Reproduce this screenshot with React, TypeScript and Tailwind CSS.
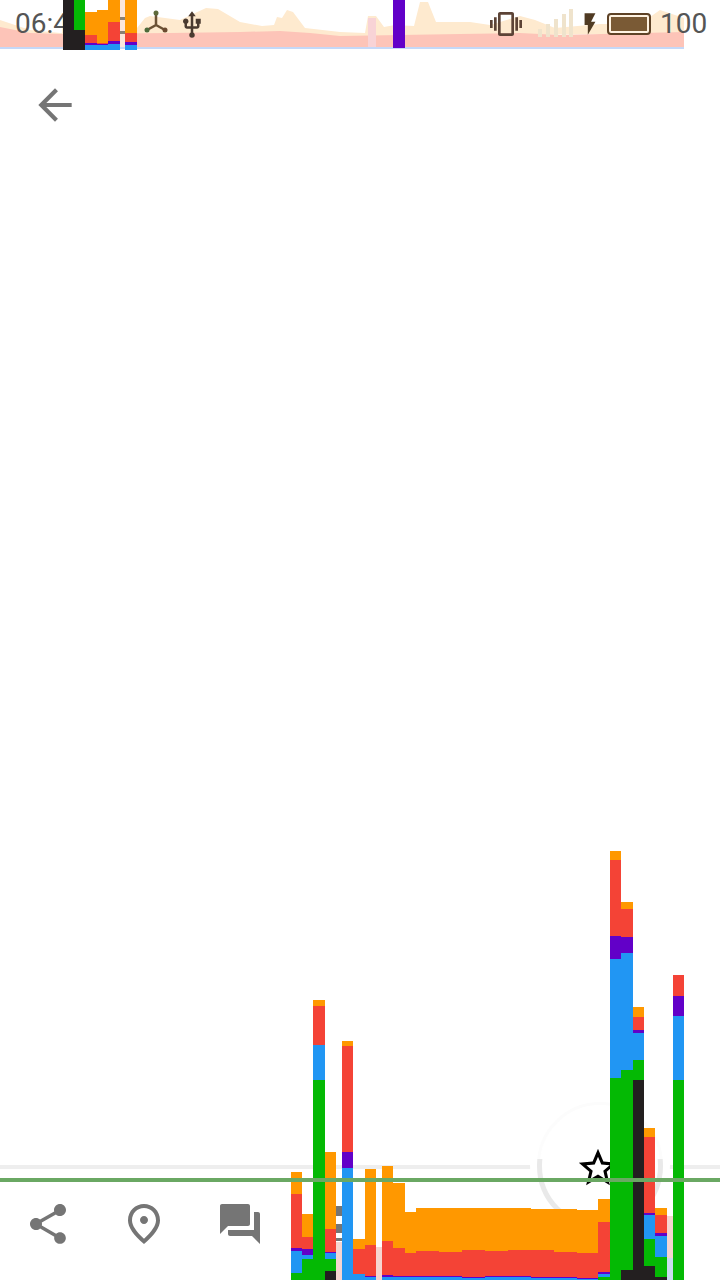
import { MdArrowBack, MdFlashOn, MdForum, MdOutlinePlace, MdShare, MdStarBorder, MdUsb, MdVibration } from "react-icons/md";

const O = "#ff9800";
const R = "#f44336";
const P = "#6200c8";
const B = "#2196f3";
const G = "#04b904";
const K = "#231f20";
const PALE = "#f6d5d0";

// one bar: x, width, top, then [colour, y where the colour ends]
type Bar = [number, number, number, [string, number][]];

const bars: Bar[] = [
  [291, 11, 1172, [[O, 1194], [R, 1248], [P, 1251], [B, 1273], [G, 1280]]],
  [302, 11, 1214, [[O, 1237], [R, 1249], [P, 1255], [B, 1259], [G, 1280]]],
  [313, 12, 1000, [[O, 1006], [R, 1045], [B, 1080], [G, 1280]]],
  [325, 11, 1152, [[O, 1229], [R, 1252], [P, 1253], [B, 1259], [G, 1271], [K, 1280]]],
  [336, 6, 1242, [[PALE, 1280]]],
  [342, 11, 1041, [[O, 1046], [R, 1152], [P, 1168], [B, 1280]]],
  [353, 12, 1239, [[O, 1249], [R, 1274], [B, 1280]]],
  [365, 11, 1169, [[O, 1245], [R, 1276], [P, 1277], [B, 1280]]],
  [376, 6, 1247, [[PALE, 1280]]],
  [382, 11, 1166, [[O, 1241], [R, 1275], [P, 1277], [B, 1280]]],
  [393, 12, 1183, [[O, 1248], [R, 1276], [P, 1277], [B, 1280]]],
  [405, 11, 1212, [[O, 1253], [R, 1276], [P, 1277], [B, 1280]]],
  [416, 23, 1208, [[O, 1251], [R, 1276], [P, 1277], [B, 1280]]],
  [439, 23, 1208, [[O, 1252], [R, 1276], [P, 1277], [B, 1280]]],
  [462, 23, 1208, [[O, 1250], [R, 1277], [P, 1278], [B, 1280]]],
  [485, 23, 1208, [[O, 1251], [R, 1276], [P, 1277], [B, 1280]]],
  [508, 23, 1208, [[O, 1250], [R, 1276], [P, 1277], [B, 1280]]],
  [531, 23, 1209, [[O, 1250], [R, 1277], [P, 1278], [B, 1280]]],
  [554, 23, 1209, [[O, 1252], [R, 1277], [P, 1278], [B, 1280]]],
  [577, 21, 1210, [[O, 1253], [R, 1278], [P, 1279], [B, 1280]]],
  [598, 12, 1199, [[O, 1222], [R, 1272], [P, 1274], [B, 1277], [G, 1280]]],
  [610, 11, 851, [[O, 860], [R, 936], [P, 959], [B, 1078], [G, 1280]]],
  [621, 12, 902, [[O, 909], [R, 937], [P, 953], [B, 1070], [G, 1270], [K, 1280]]],
  [633, 11, 1007, [[O, 1017], [R, 1030], [P, 1033], [B, 1060], [G, 1080], [K, 1280]]],
  [644, 11, 1128, [[O, 1137], [R, 1213], [P, 1215], [B, 1239], [G, 1266], [K, 1280]]],
  [655, 12, 1208, [[O, 1215], [R, 1233], [P, 1236], [B, 1257], [G, 1277], [K, 1280]]],
  [667, 6, 1216, [[PALE, 1258], ["#c9dcf0", 1280]]],
  [673, 11, 975, [[R, 996], [P, 1016], [B, 1080], [G, 1280]]],
  // status bar part
  [63, 11, 0, [[K, 50]]],
  [74, 11, 0, [[G, 30], [K, 50]]],
  [85, 12, 12, [[O, 35], [R, 43], [P, 45], [B, 50]]],
  [97, 11, 10, [[O, 43], [R, 44], [P, 45], [B, 50]]],
  [108, 12, 0, [[O, 22], [R, 41], [P, 44], [B, 50]]],
  [125, 12, 0, [[O, 33], [R, 42], [P, 45], [B, 50]]],
  [393, 12, 0, [[P, 48]]],
];

const paleOrange =
  "0,20 12,24 30,30 60,33 137,28 145,18 150,16 180,20 206,8 218,9 240,22 262,26 274,25 277,17 282,18 287,10 293,12 305,28 340,32 365,33 368,16 376,16 384,27 395,25 414,26 420,2 428,2 436,22 470,22 490,25 520,16 535,20 555,28 600,24 640,24 660,10 684,18 684,33 0,42";
const pink =
  "0,27 30,33 60,34 170,33 240,32 280,31 310,33 340,36 460,34 520,33 560,35 684,32 684,47 0,47";

function Chart() {
  return (
    <svg className="absolute top-0 left-0 w-[720px] h-[1280px]" viewBox="0 0 720 1280">
      {bars.map(([x, w, top, segs], i) => {
        let y = top;
        return (
          <g key={i}>
            {segs.map(([c, end], j) => {
              const r = <rect key={j} x={x} y={y} width={w} height={end - y} fill={c} />;
              y = end;
              return r;
            })}
          </g>
        );
      })}
      <rect x="120" y="17" width="5" height="3" fill="#8a8074" />
      <rect x="120" y="31" width="5" height="3" fill="#8a8074" />
    </svg>
  );
}

function HubIcon() {
  return (
    <svg width="30" height="30" viewBox="0 0 30 30" stroke="#6b5235" strokeWidth="2.5" fill="none">
      <path d="M15 3V15L6 20M15 15L24 20" />
      <circle cx="15" cy="3" r="2.5" fill="#5d6a3a" stroke="none" />
      <circle cx="6" cy="20" r="2.5" fill="#4d6a3a" stroke="none" />
      <circle cx="24" cy="20" r="2.5" fill="#6b4a30" stroke="none" />
    </svg>
  );
}

function SignalIcon() {
  return (
    <svg width="36" height="28" viewBox="0 0 36 28" fill="#efe3cc">
      <rect x="0" y="20" width="4" height="8" />
      <rect x="8" y="15" width="4" height="13" />
      <rect x="16" y="10" width="4" height="18" />
      <rect x="24" y="5" width="4" height="23" />
      <rect x="31" y="0" width="4" height="28" />
    </svg>
  );
}

function ListIcon() {
  return (
    <svg width="48" height="48" viewBox="0 0 48 48" fill="#757575">
      <rect x="12" y="6" width="24" height="10" />
      <rect x="12" y="24" width="24" height="9" />
      <rect x="12" y="38" width="24" height="3" />
    </svg>
  );
}

export default function App() {
  return (
    <div className="relative w-[720px] h-[1280px] overflow-hidden bg-white flex flex-col font-['Roboto',sans-serif]">
      <svg className="absolute top-0 left-0 w-[720px] h-[50px]" viewBox="0 0 720 50">
        <polygon points={paleOrange} fill="#feeacf" />
        <polygon points={pink} fill="#fdc4b8" />
        <rect x="368" y="18" width="8" height="29" fill="#f8d3d6" />
        <rect x="0" y="47" width="684" height="2" fill="#c5d8f7" />
        <rect x="120" y="0" width="5" height="47" fill="#fbe6dc" />
      </svg>

      <div className="relative h-[50px] flex items-center text-[#555] text-[28px] leading-none pl-[15px] pr-[12px]">
        <span className="w-[126px] pb-[2px]">06:4</span>
        <HubIcon />
        <span className="ml-[6px] text-[#4a3a30]">
          <MdUsb size={30} />
        </span>
        <span className="ml-auto text-[#5c4336] pb-[2px]">
          <MdVibration size={32} />
        </span>
        <span className="ml-[16px] pb-[4px]">
          <SignalIcon />
        </span>
        <span className="ml-[3px] text-[#4f3a22] pb-[2px]">
          <MdFlashOn size={26} />
        </span>
        <div className="ml-[4px] mb-[2px] w-[44px] h-[22px] rounded-[4px] border-2 border-[#5e4226] p-[2px] bg-[#fff3e2]">
          <div className="w-full h-full bg-[#7a5a35]" />
        </div>
        <span className="ml-[9px] w-[48px] pb-[2px]">100</span>
      </div>

      <div className="h-[110px] flex items-center pl-[30px] text-[#757575]">
        <MdArrowBack size={50} />
      </div>

      <div className="flex-1" />

      <div className="relative h-[115px] border-t-[4px] border-[#eeeeee]">
        {/* round button: white behind, ring only shows properly on its lower half */}
        <div className="absolute top-[-74px] left-[530px] w-[140px] h-[140px] rounded-full bg-white" />
        <div className="absolute top-[-67px] left-[537px] w-[126px] h-[126px] rounded-full border-[3px] border-[#fcfcfc]" />
        <div className="absolute top-[-10px] left-[537px] w-[126px] h-[70px] overflow-hidden">
          <div className="absolute bottom-0 left-0 w-[126px] h-[126px] rounded-full border-[5px] border-[#e9e9e9]" />
        </div>
        <div className="absolute top-[-24px] left-[575px] text-black">
          <MdStarBorder size={46} />
        </div>
        <div className="pt-[31px] flex text-[#757575]">
          <div className="w-[96px] flex justify-center">
            <MdShare size={48} />
          </div>
          <div className="w-[96px] flex justify-center">
            <MdOutlinePlace size={48} />
          </div>
          <div className="w-[96px] flex justify-center">
            <MdForum size={48} />
          </div>
          <div className="w-[96px] flex justify-center">
            <ListIcon />
          </div>
        </div>
      </div>

      <Chart />
      <div className="absolute top-[1178px] left-0 w-full h-[4px] bg-[#6aa863]" />
    </div>
  );
}
